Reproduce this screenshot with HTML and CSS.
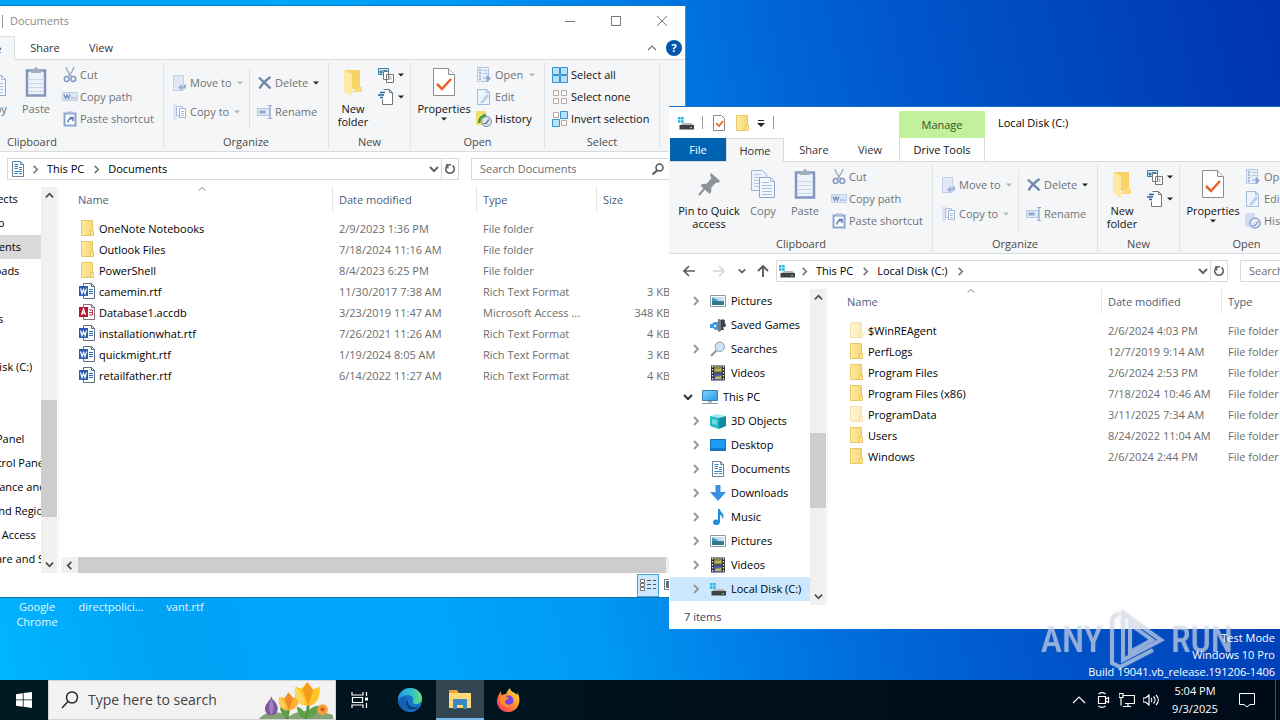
FILE: index.html
```html
<!DOCTYPE html>
<html lang="en">
<head>
<meta charset="utf-8">
<title>Desktop</title>
<link rel="stylesheet" href="styles.css">
</head>
<body>
<svg class="sprite" aria-hidden="true">
  <defs>
    <linearGradient id="g-folder" x1="0" x2="1"><stop offset="0" stop-color="#ffeba0"/><stop offset="1" stop-color="#f8d775"/></linearGradient>
    <linearGradient id="g-screen" x1="0" y1="0" x2="1" y2="1"><stop offset="0" stop-color="#7fd0ff"/><stop offset="1" stop-color="#2a9ce8"/></linearGradient>
    <linearGradient id="g-edge" x1="0" y1="0" x2="1" y2="0"><stop offset="0" stop-color="#1b9de2"/><stop offset=".6" stop-color="#35c1c8"/><stop offset="1" stop-color="#6be070"/></linearGradient>
    <linearGradient id="g-fox" x1="1" y1="0" x2="0" y2="1"><stop offset="0" stop-color="#fff04a"/><stop offset=".45" stop-color="#ff9130"/><stop offset="1" stop-color="#f5246c"/></linearGradient>
  </defs>
  <symbol id="folder" viewBox="0 0 16 16"><path d="M2.500.5h11v11l-1 4h-10z" fill="url(#g-folder)" stroke="#e9c766"/><path d="M11.500 10.500h3v5h-3z" fill="#ffe79a" stroke="#e9c766"/></symbol>
  <symbol id="word" viewBox="0 0 16 16"><path d="M4.500.5h8l3 3v12h-11z" fill="#fff" stroke="#5d6f86"/><path d="M12.500.5v3h3" fill="none" stroke="#5d6f86"/><path d="M10 6.500h4M10 8.500h4M10 10.500h4" stroke="#2b6cc0"/><path d="M0 3h9v10H0z" fill="#2a5db4"/><path d="M1.500 5.500 3 10.500l1.500-4 1.500 4 1.500-5" fill="none" stroke="#fff" stroke-width="1.200"/></symbol>
  <symbol id="access" viewBox="0 0 16 16"><path d="M4.500.5h8l3 3v12h-11z" fill="#fff" stroke="#8a7078"/><path d="M12.500.5v3h3" fill="none" stroke="#8a7078"/><path d="M10 6h3.500v5H10M10 8.500h3.500" fill="none" stroke="#c2384c"/><path d="M0 3h9v10H0z" fill="#b01c36"/><path d="m2.500 11 2-6 2 6M3.200 9h2.600" fill="none" stroke="#fff" stroke-width="1.300"/></symbol>
  <symbol id="drive" viewBox="0 0 16 16"><path d="M0 2h2.500v2.500H0zM3.200 2h2.500v2.500H3.200zM0 5.200h2.500v2.500H0zM3.200 5.200h2.500v2.500H3.200z" fill="#1cb8e0"/><path d="m5 8 8.500 0 2.500 2.500H2z" fill="#b3b6b9"/><path d="M1.500 10H16v4.500H1.500z" fill="#3f4244"/><path d="M12 12h2v1h-2z" fill="#6fdc53"/></symbol>
  <symbol id="doc" viewBox="0 0 16 16"><path d="M2.500.5h8l3 3v12h-11z" fill="#fff" stroke="#68849c"/><path d="M10.500.5v3h3" fill="none" stroke="#68849c"/><path d="M4.500 3.500h4M4.500 5.500H8M9 6.500h3M4.500 7.500H8M9 8.500h3M4.500 10.500h7.500M4.500 12.500h3M9 12.500h3" stroke="#3085c8"/></symbol>
  <symbol id="picture" viewBox="0 0 16 16"><path d="M.5 2.500h15v11H.5z" fill="#fff" stroke="#8a9aa8"/><path d="M2 4h12v8H2z" fill="#bfe0f5"/><path d="M2 8c3-2 6 1 12 0v4H2z" fill="#337a8c"/><path d="M2 5c3 0 5 2 7 2l-7 1z" fill="#4b8fc8"/></symbol>
  <symbol id="games" viewBox="0 0 16 16"><path d="M0 7h2l2-2h4v8H5L3 11H0z" fill="#3d9be0"/><path d="M8 1.500 11 3v11l-3 1z" fill="#6f7b85"/><path d="M11 3c3-2 5 1 3.500 3C17 7 16 11 13 10l1 3h-3z" fill="#3c444b"/><circle cx="5" cy="9" r="1.200" fill="#d8efff"/></symbol>
  <symbol id="search-lens" viewBox="0 0 16 16"><circle cx="9.800" cy="5.800" r="4.700" fill="#cde7f8" stroke="#8799a8"/><path d="M6.300 9.500 1 15" stroke="#8a97a2" stroke-width="2"/></symbol>
  <symbol id="video" viewBox="0 0 16 16"><path d="M1 .5h14v15H1z" fill="#2b2d33"/><path d="M4 1h8v6.500H4z" fill="#7d8b4c"/><path d="M4 8.500h8V15H4z" fill="#4d5fae"/><path d="M5 5c2-3 3 1 6-2v3H5zM5 13c3-4 4 1 6-3v4H5z" fill="#c9b850"/><path d="M2.500 1v15M13.500 1v15" stroke="#f0f0f0" stroke-width="1.300" stroke-dasharray="1.500 1.500"/></symbol>
  <symbol id="pc" viewBox="0 0 18 16"><path d="M1.500 1.500h15v10h-15z" fill="url(#g-screen)" stroke="#3c7fae"/><path d="M7 12h4v1.500H7z" fill="#9fb0bb"/><path d="M1 14.500h16" stroke="#8295a1"/></symbol>
  <symbol id="cube" viewBox="0 0 16 16"><path d="m0 3 7-2 9 2-7 2z" fill="#9eecef"/><path d="m0 3 9 2v11l-9-3z" fill="#25b8c4"/><path d="m9 5 7-2v10l-7 3z" fill="#128b9c"/><path d="m2 6 5 1v5l-5-1z" fill="#6fdbe2"/></symbol>
  <symbol id="desktop-i" viewBox="0 0 16 16"><path d="M.5 2.500h15v11H.5z" fill="#1d9bf3" stroke="#1670b8"/><path d="M1 12h14" stroke="#0b5fa8"/></symbol>
  <symbol id="download" viewBox="0 0 16 16"><path d="M5.500 0h5v7H16l-8 9-8-9h5.500z" fill="#3b8ddd"/></symbol>
  <symbol id="music" viewBox="0 0 16 16"><path d="M8 0h2c0 3 4 4 3.500 8-.3 1.500-1 2-1.500 2 1-3-1-3.500-2-4v7c0 4-7 4-7 .5C3 10.500 6 10 8 11z" fill="#1e8fdc"/></symbol>
  <symbol id="scissors" viewBox="0 0 16 16"><path d="M4 0c.5 4 3 6 5.500 9.500M12 0c-.5 4-3 6-5.500 9.500" fill="none" stroke="#9aa8bf" stroke-width="1.400"/><circle cx="4.700" cy="12" r="2.400" fill="none" stroke="#8298c4" stroke-width="1.500"/><circle cx="11.300" cy="12" r="2.400" fill="none" stroke="#8298c4" stroke-width="1.500"/></symbol>
  <symbol id="copypath" viewBox="0 0 16 16"><path d="M.5 3.500h15v8H.5z" fill="#dce6f5" stroke="#c3d0e7"/><path d="m2 5.500 1.500 4L5 6l1.500 3.500 1.500-4M9 9h1.500M11.300 9h1.200M13.300 9h1" fill="none" stroke="#6f8ac2" stroke-width="1.200"/></symbol>
  <symbol id="pasteshort" viewBox="0 0 16 16"><path d="M2.500 2.500h11v12h-11z" fill="#fff" stroke="#8ea5cf" stroke-width="2"/><path d="M5 .5h6v3H5z" fill="#a9bade"/><path d="M6 11.500c0-3 1-4 4-4M7.500 6.500H11V10" fill="none" stroke="#5778ba" stroke-width="1.500"/></symbol>
  <symbol id="moveto" viewBox="0 0 16 16"><path d="M1.500.5h10v15h-10z" fill="#e1e8f5" stroke="#c3d0e7"/><path d="M13 9.500V12.500H9" fill="none" stroke="#9db1d4" stroke-width="2"/><path d="M6 12.500 10 9v7z" fill="#9db1d4"/></symbol>
  <symbol id="copyto" viewBox="0 0 16 16"><path d="M1 .5h4v15H1z" fill="#dce5f5"/><path d="M4.500 2.500h6v9h-6z" fill="#f2f6fc" stroke="#adbfdf"/><path d="M7.500 4.500h6v9h-6z" fill="#fff" stroke="#9db3d9"/><path d="M9 7.500h3M9 9.500h3M9 11.500h3" stroke="#a9bcdd"/></symbol>
  <symbol id="delete" viewBox="0 0 16 16"><path d="M2 2.500c4 4 8 7 11.500 11M13.500 2C9 5 5 9 2.500 13.500" fill="none" stroke="#7287ae" stroke-width="2.400"/></symbol>
  <symbol id="rename" viewBox="0 0 16 16"><path d="M.5 4.500h12v7H.5z" fill="#dfe8f6" stroke="#b4c6e4"/><path d="M2.500 6.500h6v3h-6z" fill="#8fa8d4"/><path d="M11 1.500h4M13 1.500v13M11 14.500h4" stroke="#91a8cd" stroke-width="1.200"/></symbol>
  <symbol id="newitem" viewBox="0 0 16 16"><path d="M.5 1.500h10v6H.5z" fill="#d9eff8" stroke="#3a7ca5"/><path d="M2 4h2v2H2zM5 3.500h4" fill="#3a7ca5" stroke="#3a7ca5"/><path d="M5.500 4.500h5v8h-5zM8.500 7.500h7v8h-7z" fill="#fff" stroke="#777"/><path d="M10.500 10h3M10.500 12h3" stroke="#999"/></symbol>
  <symbol id="easy" viewBox="0 0 16 16"><path d="M5.500.5h6l3 3v12h-10v-5" fill="#fff" stroke="#777"/><path d="M11.500.5v3h3" fill="none" stroke="#777"/><path d="M2 3.500h5M0 6h6M2 8.500h3" stroke="#265f9e" stroke-width="1.300"/></symbol>
  <symbol id="open" viewBox="0 0 16 16"><path d="M1.500.5h11v14h-11z" fill="#eaf0f9" stroke="#b5c5e2"/><path d="M3 3h2M3 6h2M3 9h2M3 12h2" stroke="#8ea3cd" stroke-width="1.500"/><path d="M6.500 3.500h5M6.500 6.500h5" stroke="#b5c5e2"/><path d="M7 11h4M11 8.500l3.500 3-3.500 3z" fill="#8ea6d3" stroke="#8ea6d3"/></symbol>
  <symbol id="edit" viewBox="0 0 16 16"><path d="M1.500.5h9l3 3v12h-12z" fill="#edf3fb" stroke="#a4bbdb"/><path d="M10.500.5v3h3" fill="none" stroke="#a4bbdb"/><path d="m4 14 7-9 2 2-6 7z" fill="#b6cdec"/></symbol>
  <symbol id="history" viewBox="0 0 16 16"><path d="M0 0h10v14H0z" fill="#f7dc6e"/><path d="M3 12c0-5 3-7 6-7l-1-2" fill="none" stroke="#3d9d3e" stroke-width="2.500"/><circle cx="10.500" cy="10.500" r="5" fill="#dbe4ea" stroke="#7a8790"/><path d="M7.500 12.500h2.500l3-4" fill="none" stroke="#4f6472" stroke-width="1.200"/></symbol>
  <symbol id="history-dim" viewBox="0 0 16 16"><path d="M0 0h10v14H0z" fill="#d3ddf0"/><circle cx="10" cy="10" r="5" fill="#e4ebf7" stroke="#8fa5cf" stroke-width="1.500"/><path d="M7.500 12.500h2.500l3-4" fill="none" stroke="#7890c0" stroke-width="1.200"/></symbol>
  <symbol id="selall" viewBox="0 0 16 16"><path d="M.5.5h7v7h-7zM8.500.5h7v7h-7zM.5 8.500h7v7h-7zM8.500 8.500h7v7h-7z" fill="#b8e2fa" stroke="#3a93cf"/></symbol>
  <symbol id="selnone" viewBox="0 0 16 16"><path d="M1.500 1.500h5v5h-5zM9.500 1.500h5v5h-5zM1.500 9.500h5v5h-5zM9.500 9.500h5v5h-5z" fill="#fff" stroke="#b9a9a2"/></symbol>
  <symbol id="selinv" viewBox="0 0 16 16"><path d="M1.500 1.500h5v5h-5zM9.500 9.500h5v5h-5z" fill="#fff" stroke="#b9a9a2"/><path d="M8.500.5h7v7h-7zM.5 8.500h7v7h-7z" fill="#b8e2fa" stroke="#3a93cf"/></symbol>
  <symbol id="pin" viewBox="0 0 32 32"><path d="m18 5 9 8-2 2-2-.5-5 5.500c1 3 0 5-1.500 6L7.500 17.500c1.500-2 4-2 6-1.500l5-6-1.500-3z" fill="#8c9298"/><path d="m12 20-6 7" stroke="#8c9298" stroke-width="2"/></symbol>
  <symbol id="copy" viewBox="0 0 32 32"><path d="M4.500 2.500h11l4 4v16h-15z" fill="#eef3fb" stroke="#9fb2d8"/><path d="M7 6.500h7M7 9.500h10M7 12.500h10M7 15.500h10M7 18.500h10" stroke="#b7c8e6"/><path d="M12.500 9.500h11l4 4v16h-15z" fill="#f4f8fd" stroke="#8fa6d2"/><path d="M23.500 9.500v4h4M15 14.500h7M15 17.500h10M15 20.500h10M15 23.500h10M15 26.500h10" fill="none" stroke="#a9bde0"/></symbol>
  <symbol id="paste" viewBox="0 0 32 32"><path d="M7 4.500h18v25H7z" fill="#eef3fa" stroke="#8296c0" stroke-width="2.500"/><path d="M9 13.500h14M9 17.500h14M9 21.500h14M9 25.500h14" stroke="#c8d5ea"/><path d="M11 7V4h3c0-4 4-4 4 0h3v3z" fill="#a3aec1"/></symbol>
  <symbol id="newfolder" viewBox="0 0 32 32"><path d="M7 4h16v19H8z" fill="#f6d267"/><path d="m7 4 8 4v22l-8-5z" fill="#ffe9a3"/><path d="M20 21h5v5H15z" fill="#f9da7b"/></symbol>
  <symbol id="props" viewBox="0 0 32 32"><path d="M5.500 2.500h15l6 6v21h-21z" fill="#fff" stroke="#8d8d8d"/><path d="M20.500 2.500v6h6" fill="#f4f4f4" stroke="#8d8d8d"/><path d="m9 18 5 5 9-10" fill="none" stroke="#e8612a" stroke-width="2.500"/></symbol>
  <symbol id="props-s" viewBox="0 0 16 16"><path d="M2.500.5h8l3 3v12h-11z" fill="#fff" stroke="#8f8380"/><path d="m5 8 3 3 4-5" fill="none" stroke="#e8612a" stroke-width="1.700"/></symbol>
  <symbol id="down" viewBox="0 0 8 8"><path d="M1 2.500h6L4 5.500z" fill="currentColor"/></symbol>
  <symbol id="chev-r" viewBox="0 0 10 10"><path d="m3 1 4 4-4 4" fill="none" stroke="currentColor" stroke-width="1.800"/></symbol>
  <symbol id="chev-l" viewBox="0 0 10 10"><path d="M7 1 3 5l4 4" fill="none" stroke="currentColor" stroke-width="2"/></symbol>
  <symbol id="chev-d" viewBox="0 0 10 10"><path d="m1 3 4 4 4-4" fill="none" stroke="currentColor" stroke-width="2"/></symbol>
  <symbol id="chev-u" viewBox="0 0 10 10"><path d="m1 7 4-4 4 4" fill="none" stroke="currentColor" stroke-width="2"/></symbol>
  <symbol id="chev-thin" viewBox="0 0 10 10"><path d="m1 7 4-4 4 4" fill="none" stroke="currentColor" stroke-width="1.200"/></symbol>
  <symbol id="arrow-l" viewBox="0 0 16 16"><path d="M14 8H3M8 3 3 8l5 5" fill="none" stroke="currentColor" stroke-width="1.700"/></symbol>
  <symbol id="arrow-r" viewBox="0 0 16 16"><path d="M2 8h11M8 3l5 5-5 5" fill="none" stroke="currentColor" stroke-width="1.500"/></symbol>
  <symbol id="arrow-u" viewBox="0 0 16 16"><path d="M8 14V3M3 8l5-5 5 5" fill="none" stroke="currentColor" stroke-width="1.900"/></symbol>
  <symbol id="refresh" viewBox="0 0 16 16"><path d="M10.500 4.500a4.300 4.300 0 1 1-5 0" fill="none" stroke="currentColor" stroke-width="1.600"/><path d="M4 3h5v1.500H6.500V7.500H5z" fill="currentColor"/></symbol>
  <symbol id="lens" viewBox="0 0 16 16"><circle cx="9.500" cy="6.500" r="3.500" fill="none" stroke="currentColor" stroke-width="1.500"/><path d="M7 9.500 2.500 13.500" stroke="currentColor" stroke-width="2"/></symbol>
</svg>

<main class="desktop">
  <ul class="shortcuts">
    <li>Google Chrome</li>
    <li>directpolici...</li>
    <li>vant.rtf</li>
  </ul>

  <section class="window window-docs">
    <header class="titlebar">
      <span class="quick"><i class="bar"></i></span>
      <span class="caption">Documents</span>
      <span class="controls">
        <button aria-label="Minimize"><svg viewBox="0 0 12 12"><path d="M1 6.500h10"/></svg></button>
        <button aria-label="Maximize"><svg viewBox="0 0 12 12"><path d="M1.500 1.500h9v9h-9z"/></svg></button>
        <button aria-label="Close"><svg viewBox="0 0 12 12"><path d="m1 1 10 10M11 1 1 11"/></svg></button>
      </span>
    </header>
    <nav class="tabs">
      <button class="tab-file" aria-label="File"></button><button class="tab tab-on">Home</button><button class="tab">Share</button><button class="tab">View</button>
      <span class="tab-tools"><svg><use href="#chev-thin"/></svg><button class="help" aria-label="Help">?</button></span>
    </nav>
    <div class="ribbon">
      <div class="group g-clip">
        <div class="group-body">
          <span class="big w-pin"></span>
          <button class="big w-copy dim"><svg><use href="#copy"/></svg>Copy</button>
          <button class="big w-paste dim"><svg><use href="#paste"/></svg>Paste</button>
          <div class="stack">
            <button class="small dim"><svg><use href="#scissors"/></svg>Cut</button>
            <button class="small dim"><svg><use href="#copypath"/></svg>Copy path</button>
            <button class="small dim"><svg><use href="#pasteshort"/></svg>Paste shortcut</button>
          </div>
        </div>
        <div class="group-name">Clipboard</div>
      </div>
      <div class="group g-org">
        <div class="group-body">
          <div class="stack two first">
            <button class="small dim"><svg><use href="#moveto"/></svg>Move to<svg class="dd pale"><use href="#down"/></svg></button>
            <button class="small dim"><svg><use href="#copyto"/></svg>Copy to<svg class="dd pale"><use href="#down"/></svg></button>
          </div>
          <div class="stack two">
            <button class="small dim"><svg><use href="#delete"/></svg>Delete<svg class="dd"><use href="#down"/></svg></button>
            <button class="small dim"><svg><use href="#rename"/></svg>Rename</button>
          </div>
        </div>
        <div class="group-name">Organize</div>
      </div>
      <div class="group g-new">
        <div class="group-body">
          <button class="big w-new"><svg><use href="#newfolder"/></svg>New folder</button>
          <div class="stack flush">
            <button class="small tight" aria-label="New item"><svg><use href="#newitem"/></svg><svg class="dd"><use href="#down"/></svg></button>
            <button class="small tight" aria-label="Easy access"><svg><use href="#easy"/></svg><svg class="dd"><use href="#down"/></svg></button>
          </div>
        </div>
        <div class="group-name">New</div>
      </div>
      <div class="group g-open">
        <div class="group-body">
          <button class="big w-props"><svg><use href="#props"/></svg>Properties<svg class="dd"><use href="#down"/></svg></button>
          <div class="stack flush">
            <button class="small dim"><svg><use href="#open"/></svg>Open<svg class="dd pale"><use href="#down"/></svg></button>
            <button class="small dim"><svg><use href="#edit"/></svg>Edit</button>
            <button class="small"><svg><use href="#history"/></svg>History</button>
          </div>
        </div>
        <div class="group-name">Open</div>
      </div>
      <div class="group g-select">
        <div class="group-body">
          <div class="stack sel">
            <button class="small"><svg><use href="#selall"/></svg>Select all</button>
            <button class="small"><svg><use href="#selnone"/></svg>Select none</button>
            <button class="small"><svg><use href="#selinv"/></svg>Invert selection</button>
          </div>
        </div>
        <div class="group-name">Select</div>
      </div>
    </div>
    <div class="address">
      <div class="nav"></div>
      <div class="crumbs">
        <svg class="ic"><use href="#doc"/></svg>
        <svg class="sep"><use href="#chev-r"/></svg><button>This PC</button>
        <svg class="sep"><use href="#chev-r"/></svg><button>Documents</button>
        <button class="hist" aria-label="Previous locations"><svg><use href="#chev-d"/></svg></button>
        <button class="refresh" aria-label="Refresh"><svg><use href="#refresh"/></svg></button>
      </div>
      <div class="search"><input type="text" placeholder="Search Documents" aria-label="Search Documents"><svg><use href="#lens"/></svg></div>
    </div>
    <div class="content">
      <ul class="tree">
        <li class="leaf">3D Objects</li>
        <li class="leaf">Desktop</li>
        <li class="leaf chosen-idle">Documents</li>
        <li class="leaf">Downloads</li>
        <li class="leaf"></li>
        <li class="leaf">Pictures</li>
        <li class="leaf"></li>
        <li class="leaf">Local Disk (C:)</li>
        <li></li>
        <li></li>
        <li class="root">Control Panel</li>
        <li class="leaf">All Control Panel Items</li>
        <li class="leaf">Appearance and Personalization</li>
        <li class="leaf">Clock and Region</li>
        <li class="leaf">Ease of Access</li>
        <li class="leaf">Hardware and Sound</li>
      </ul>
      <div class="vscroll vscroll-docs"><svg><use href="#chev-u"/></svg><i></i><svg><use href="#chev-d"/></svg></div>
      <div class="pane">
        <svg class="sort"><use href="#chev-thin"/></svg>
        <table class="files">
          <colgroup><col class="c-name"><col class="c-date-wide"><col class="c-type"><col class="c-size"></colgroup>
          <thead><tr><th>Name</th><th>Date modified</th><th>Type</th><th>Size</th></tr></thead>
          <tbody>
            <tr><td><svg><use href="#folder"/></svg>OneNote Notebooks</td><td>2/9/2023 1:36 PM</td><td>File folder</td><td></td></tr>
            <tr><td><svg><use href="#folder"/></svg>Outlook Files</td><td>7/18/2024 11:16 AM</td><td>File folder</td><td></td></tr>
            <tr><td><svg><use href="#folder"/></svg>PowerShell</td><td>8/4/2023 6:25 PM</td><td>File folder</td><td></td></tr>
            <tr><td><svg><use href="#word"/></svg>camemin.rtf</td><td>11/30/2017 7:38 AM</td><td>Rich Text Format</td><td>3 KB</td></tr>
            <tr><td><svg><use href="#access"/></svg>Database1.accdb</td><td>3/23/2019 11:47 AM</td><td>Microsoft Access ...</td><td>348 KB</td></tr>
            <tr><td><svg><use href="#word"/></svg>installationwhat.rtf</td><td>7/26/2021 11:26 AM</td><td>Rich Text Format</td><td>4 KB</td></tr>
            <tr><td><svg><use href="#word"/></svg>quickmight.rtf</td><td>1/19/2024 8:05 AM</td><td>Rich Text Format</td><td>3 KB</td></tr>
            <tr><td><svg><use href="#word"/></svg>retailfather.rtf</td><td>6/14/2022 11:27 AM</td><td>Rich Text Format</td><td>4 KB</td></tr>
          </tbody>
        </table>
        <div class="hscroll"><svg><use href="#chev-l"/></svg><i></i></div>
      </div>
    </div>
    <footer class="status">
      <span class="views">
        <button class="view-on" aria-label="Details"><svg viewBox="0 0 18 16"><path d="M1.500 2.500h4v3h-4zM1.500 6.500h4v3h-4zM1.500 10.500h4v3h-4z" fill="#fff" stroke="#777"/><path d="M8 3.500h4M8 7.500h4M8 11.500h4M14 3.500h3M14 7.500h3M14 11.500h3" stroke="#555"/></svg></button>
        <button aria-label="Large icons"><svg viewBox="0 0 18 16"><path d="M3.500 2.500h12v10h-12z" fill="#fff" stroke="#777"/><path d="M5 4h9v7H5z" fill="#5a6f80"/></svg></button>
      </span>
    </footer>
  </section>

  <section class="window window-disk">
    <header class="titlebar">
      <span class="quick"><svg><use href="#drive"/></svg><i class="bar"></i><svg><use href="#props-s"/></svg><svg><use href="#folder"/></svg><svg class="cust" viewBox="0 0 8 8"><path d="M1 .5h6" stroke="#222"/><path d="M0 3h8L4 7z" fill="#222"/></svg><i class="bar"></i></span>
      <span class="manage">Manage</span>
      <span class="caption">Local Disk (C:)</span>
    </header>
    <nav class="tabs">
      <button class="tab-file">File</button><button class="tab tab-on">Home</button><button class="tab">Share</button><button class="tab">View</button><button class="tab-drive">Drive Tools</button>
    </nav>
    <div class="ribbon">
      <div class="group g-clip">
        <div class="group-body">
          <button class="big w-pin"><svg><use href="#pin"/></svg>Pin to Quick access</button>
          <button class="big w-copy dim"><svg><use href="#copy"/></svg>Copy</button>
          <button class="big w-paste dim"><svg><use href="#paste"/></svg>Paste</button>
          <div class="stack">
            <button class="small dim"><svg><use href="#scissors"/></svg>Cut</button>
            <button class="small dim"><svg><use href="#copypath"/></svg>Copy path</button>
            <button class="small dim"><svg><use href="#pasteshort"/></svg>Paste shortcut</button>
          </div>
        </div>
        <div class="group-name">Clipboard</div>
      </div>
      <div class="group g-org">
        <div class="group-body">
          <div class="stack two first">
            <button class="small dim"><svg><use href="#moveto"/></svg>Move to<svg class="dd pale"><use href="#down"/></svg></button>
            <button class="small dim"><svg><use href="#copyto"/></svg>Copy to<svg class="dd pale"><use href="#down"/></svg></button>
          </div>
          <div class="stack two">
            <button class="small dim"><svg><use href="#delete"/></svg>Delete<svg class="dd"><use href="#down"/></svg></button>
            <button class="small dim"><svg><use href="#rename"/></svg>Rename</button>
          </div>
        </div>
        <div class="group-name">Organize</div>
      </div>
      <div class="group g-new">
        <div class="group-body">
          <button class="big w-new"><svg><use href="#newfolder"/></svg>New folder</button>
          <div class="stack flush">
            <button class="small tight" aria-label="New item"><svg><use href="#newitem"/></svg><svg class="dd"><use href="#down"/></svg></button>
            <button class="small tight" aria-label="Easy access"><svg><use href="#easy"/></svg><svg class="dd"><use href="#down"/></svg></button>
          </div>
        </div>
        <div class="group-name">New</div>
      </div>
      <div class="group g-open">
        <div class="group-body">
          <button class="big w-props"><svg><use href="#props"/></svg>Properties<svg class="dd"><use href="#down"/></svg></button>
          <div class="stack flush">
            <button class="small dim"><svg><use href="#open"/></svg>Open</button>
            <button class="small dim"><svg><use href="#edit"/></svg>Edit</button>
            <button class="small dim"><svg><use href="#history-dim"/></svg>History</button>
          </div>
        </div>
        <div class="group-name">Open</div>
      </div>
    </div>
    <div class="address">
      <div class="nav">
        <button aria-label="Back"><svg><use href="#arrow-l"/></svg></button>
        <button class="off" aria-label="Forward"><svg><use href="#arrow-r"/></svg></button>
        <button class="recent" aria-label="Recent locations"><svg><use href="#chev-d"/></svg></button>
        <button class="up" aria-label="Up"><svg><use href="#arrow-u"/></svg></button>
      </div>
      <div class="crumbs">
        <svg class="ic"><use href="#drive"/></svg>
        <svg class="sep"><use href="#chev-r"/></svg><button>This PC</button>
        <svg class="sep"><use href="#chev-r"/></svg><button>Local Disk (C:)</button>
        <svg class="sep"><use href="#chev-r"/></svg>
        <button class="hist" aria-label="Previous locations"><svg><use href="#chev-d"/></svg></button>
        <button class="refresh" aria-label="Refresh"><svg><use href="#refresh"/></svg></button>
      </div>
      <div class="search"><input type="text" placeholder="Search Local Disk (C:)" aria-label="Search Local Disk (C:)"></div>
    </div>
    <div class="content">
      <ul class="tree">
        <li class="node"><svg class="tw"><use href="#chev-r"/></svg><svg class="ic"><use href="#picture"/></svg>Pictures</li>
        <li class="node"><i class="tw"></i><svg class="ic"><use href="#games"/></svg>Saved Games</li>
        <li class="node"><svg class="tw"><use href="#chev-r"/></svg><svg class="ic"><use href="#search-lens"/></svg>Searches</li>
        <li class="node"><i class="tw"></i><svg class="ic"><use href="#video"/></svg>Videos</li>
        <li class="node top"><svg class="tw"><use href="#chev-d"/></svg><svg class="ic"><use href="#pc"/></svg>This PC</li>
        <li class="node"><svg class="tw"><use href="#chev-r"/></svg><svg class="ic"><use href="#cube"/></svg>3D Objects</li>
        <li class="node"><svg class="tw"><use href="#chev-r"/></svg><svg class="ic"><use href="#desktop-i"/></svg>Desktop</li>
        <li class="node"><svg class="tw"><use href="#chev-r"/></svg><svg class="ic"><use href="#doc"/></svg>Documents</li>
        <li class="node"><svg class="tw"><use href="#chev-r"/></svg><svg class="ic"><use href="#download"/></svg>Downloads</li>
        <li class="node"><svg class="tw"><use href="#chev-r"/></svg><svg class="ic"><use href="#music"/></svg>Music</li>
        <li class="node"><svg class="tw"><use href="#chev-r"/></svg><svg class="ic"><use href="#picture"/></svg>Pictures</li>
        <li class="node"><svg class="tw"><use href="#chev-r"/></svg><svg class="ic"><use href="#video"/></svg>Videos</li>
        <li class="node chosen"><svg class="tw"><use href="#chev-r"/></svg><svg class="ic"><use href="#drive"/></svg>Local Disk (C:)</li>
      </ul>
      <div class="vscroll vscroll-disk"><svg><use href="#chev-u"/></svg><i></i><svg><use href="#chev-d"/></svg></div>
      <div class="pane">
        <svg class="sort"><use href="#chev-thin"/></svg>
        <table class="files">
          <colgroup><col class="c-name"><col class="c-date"><col class="c-type"></colgroup>
          <thead><tr><th>Name</th><th>Date modified</th><th>Type</th></tr></thead>
          <tbody>
            <tr><td><svg class="faint"><use href="#folder"/></svg>$WinREAgent</td><td>2/6/2024 4:03 PM</td><td>File folder</td></tr>
            <tr><td><svg><use href="#folder"/></svg>PerfLogs</td><td>12/7/2019 9:14 AM</td><td>File folder</td></tr>
            <tr><td><svg><use href="#folder"/></svg>Program Files</td><td>2/6/2024 2:53 PM</td><td>File folder</td></tr>
            <tr><td><svg><use href="#folder"/></svg>Program Files (x86)</td><td>7/18/2024 10:46 AM</td><td>File folder</td></tr>
            <tr><td><svg class="faint"><use href="#folder"/></svg>ProgramData</td><td>3/11/2025 7:34 AM</td><td>File folder</td></tr>
            <tr><td><svg><use href="#folder"/></svg>Users</td><td>8/24/2022 11:04 AM</td><td>File folder</td></tr>
            <tr><td><svg><use href="#folder"/></svg>Windows</td><td>2/6/2024 2:44 PM</td><td>File folder</td></tr>
          </tbody>
        </table>
      </div>
    </div>
    <footer class="status">7 items</footer>
  </section>

  <div class="brand"><span>ANY</span><svg viewBox="0 0 56 60"><path d="M14 3v47l38-20zM21 14l22 16-22 12z" fill="none" stroke="currentColor" stroke-width="4"/><path d="M3 8v45l8 4 33-17M3 8l7-5" fill="none" stroke="currentColor" stroke-width="4"/></svg><span>RUN</span></div>
  <div class="build"><div>Test Mode</div><div>Windows 10 Pro</div><div>Build 19041.vb_release.191206-1406</div></div>
</main>

<footer class="taskbar">
  <button class="start" aria-label="Start"><svg viewBox="0 0 16 16"><path d="m0 2.200 6.800-1v6.300H0zM7.600 1.100 16 0v7.500H7.600zM0 8.300h6.800v6.400L0 13.800zM7.600 8.300H16V16l-8.400-1.200z" fill="#fff"/></svg></button>
  <label class="find">
    <svg class="find-lens" viewBox="0 0 18 18"><circle cx="11" cy="6.500" r="5.500" fill="none" stroke="#222" stroke-width="1.400"/><path d="m7 10.500-6 6.500" stroke="#222" stroke-width="1.400"/></svg>
    <input type="text" placeholder="Type here to search" aria-label="Type here to search">
    <svg class="flowers" viewBox="0 0 78 40">
      <path d="M0 40c8-10 22-8 32-3 12-9 34-6 46-1v4z" fill="#86a374"/>
      <path d="M8 34c-4-6 0-10 4-15l1-3 1 3c6 5 8 12 3 16-3 2-7 2-9-1z" fill="#7b5aa0"/><path d="M13 19c-3 6-3 12 0 17 3-5 3-11 0-17z" fill="#a383c2"/>
      <path d="M31 28c0 5-1 8-2 12M52 24c0 6-1 11-3 16" stroke="#4a8f3b" stroke-width="3"/>
      <path d="M32 39c-1-8-6-11-10-11 1 7 5 11 10 11zM50 39c0-9 7-13 13-13 0 7-5 13-13 13zM49 39c0-8-5-11-9-12 0 7 4 12 9 12z" fill="#5fa04c"/>
      <path d="M21 17c-1 9 3 14 10 14s12-6 11-15l-7 2-4-6-4 6z" fill="#f9b233"/><path d="m27 19 4-7 5 6-4 13z" fill="#f08a24"/><path d="M21 17c5 3 7 7 8 13-6-2-8-6-8-13z" fill="#ffce4d"/>
      <path d="M38 6c-2 13 4 20 13 20s14-8 13-20l-7 3-6-8-6 7z" fill="#ffc425"/><path d="m46 9 5-8 6 9-5 16z" fill="#f59a1e"/><path d="M38 6c6 4 9 9 10 19-8-2-11-9-10-19z" fill="#ffd95c"/>
      <circle cx="67" cy="30" r="5.500" fill="#f6a03a"/><circle cx="67" cy="30" r="2.200" fill="#c75a20"/>
    </svg>
  </label>
  <button class="app" aria-label="Task View"><svg class="tv" viewBox="0 0 18 18"><path d="M1 1v3h11V1M1 17v-3h11v3M1.500 6.500h10v5h-10zM15.500 1v4M15.500 12v5" fill="none" stroke="#fff" stroke-width="1.200"/><path d="M14 6.500h3v3h-3z" fill="#fff"/></svg></button>
  <button class="app" aria-label="Microsoft Edge"><svg viewBox="0 0 24 24"><circle cx="12" cy="12" r="12" fill="#1576c8"/><path d="M0 11C1 4 6 0 12 0c7 0 12 5 12 10 0 4-3 6-6 6-2 0-4-1-3-3 1-3-1-6-5-6-5 0-9 3-10 4z" fill="url(#g-edge)"/><path d="M9 10c-3 4-2 11 5 13-8 1-13-4-13-9 0-4 4-6 8-4z" fill="#1261b4"/><path d="M10 12c-1 6 5 9 11 6-3 4-8 5-11 2-3-3-2-7 0-8z" fill="#0d3f80"/></svg></button>
  <button class="app running" aria-label="File Explorer"><svg viewBox="0 0 24 24"><path d="M1 3h8l2 3h11v15H1z" fill="#e8a33a"/><path d="M1 6h22v15H1z" fill="#ffd977"/><path d="M5 12h14v10h-4v-4H9v4H5z" fill="#3a88c4"/></svg></button>
  <button class="app" aria-label="Firefox"><svg viewBox="0 0 24 24"><path d="M5 3c0 2 0 3 1 4 2-1 3-1 4-1 1-3 3-5 4-6 0 4 5 4 7 7 1-1 0-2 0-3 3 4 3 10 1 14-2 4-6 6-10 6C5 24 1 19 1 13c0-4 2-7 4-10z" fill="url(#g-fox)"/><circle cx="12.500" cy="12.500" r="5" fill="#7542e5"/><path d="M4 9c3-2 5-1 7 0l2 1c-1 2-4 1-4 4 1 3 5 4 8 1-1 5-9 6-12 1-1-2-2-5-1-7z" fill="#ff8a2e"/></svg></button>
  <div class="tray">
    <svg viewBox="0 0 16 16"><path d="m2 11 6-6 6 6" fill="none" stroke="#fff" stroke-width="1.200"/></svg>
    <svg viewBox="0 0 16 16"><path d="M3.500 4.500h7v7h-7zM10.500 7l3-1.500v5l-3-1.500M3.500 2c2-1.500 5-1.500 7 0M3.500 14c2 1.500 5 1.500 7 0" fill="none" stroke="#fff" stroke-width="1.200"/></svg>
    <svg viewBox="0 0 16 16"><path d="M4 3.500h11.500v8H6M0 1.500h4v4H0zM2 6v7.500M4 14.500h8M9 12v2" fill="none" stroke="#fff" stroke-width="1.200"/></svg>
    <svg viewBox="0 0 16 16"><path d="M0 6h2.500L6 3v10L2.500 10H0zM8 6c1 1 1 3 0 4M10.500 4.500c2 2 2 5 0 7M13 3c3 3 3 7 0 10" fill="none" stroke="#fff" stroke-width="1.200"/></svg>
  </div>
  <div class="clock"><div>5:04 PM</div><div>9/3/2025</div></div>
  <button class="notes" aria-label="Notifications"><svg viewBox="0 0 16 16"><path d="M.5 1.500h15v11h-4.500L8 15l-3-2.500H.5z" fill="none" stroke="#fff"/></svg></button>
  <i class="peek"></i>
</footer>
</body>
</html>
```
FILE: styles.css
```css
* { box-sizing: border-box; }
html, body { height: 100%; }
body {
  margin: 0;
  display: flex;
  flex-direction: column;
  overflow: hidden;
  font: 11px/14px "Open Sans", "Noto Sans", sans-serif;
  color: #111;
}
button, input {
  font: inherit;
  color: inherit;
  border: 0;
  padding: 0;
  background: none;
}
ul { list-style: none; margin: 0; padding: 0; }
svg { flex: none; }
.sprite { position: absolute; width: 0; height: 0; }

.desktop {
  flex: 1;
  position: relative;
  overflow: hidden;
  background: linear-gradient(78deg, #00b5ff 0%, #00a2f6 12%, #00a6fa 30%, #0098f4 43%, #0086ea 50%, #0070de 59%, #0064d4 65%, #0053c8 75%, #0043bb 88%, #0034ae 100%);
}
.shortcuts {
  position: absolute;
  left: 0;
  top: 599px;
  display: flex;
  color: #e4f6ff;
  text-align: center;
  line-height: 15px;
}
.shortcuts li { width: 74px; padding: 0 12px; display: flex; justify-content: center; }

/* windows */
.window {
  position: absolute;
  width: 785px;
  display: flex;
  flex-direction: column;
  background: #fff;
  border-top: 1px solid #1272c4;
}
.window-docs { left: -100px; top: 5px; height: 593px; border-bottom: 1px solid #1272a4; box-shadow: 1px 0 #3c8fd0; }
.window-disk { left: 669px; top: 106px; height: 523px; }

.titlebar { display: flex; height: 31px; align-items: center; }
.quick { display: flex; align-items: center; gap: 8px; padding: 0 0 0 9px; width: 230px; }
.quick svg { width: 16px; height: 16px; }
.quick svg + svg { margin-left: -1px; }
.quick svg.cust { width: 8px; height: 8px; margin: 2px 0 0 -1px; }
.bar { width: 1px; height: 13px; background: #9a9a9a; }
.window-docs .quick { width: 110px; justify-content: flex-end; padding-right: 7px; }
.window-docs .caption { color: #8a8a8a; flex: 1; }
.window-docs .titlebar { height: 30px; }
.manage {
  width: 86px;
  height: 27px;
  align-self: flex-end;
  display: flex;
  align-items: center;
  justify-content: center;
  background: #c3f09b;
  color: #33502a;
}
.window-disk .caption { padding-left: 13px; color: #000; }
.controls { display: flex; }
.controls button { width: 46px; height: 28px; display: grid; place-items: center; }
.controls svg { width: 12px; height: 12px; fill: none; stroke: #777; }

.tabs { display: flex; height: 24px; border-bottom: 1px solid #dadbdc; }
.tab-file { width: 56px; margin-left: 1px; background: #0063b1; color: #fff; }
.tab { width: 56px; color: #333; }
.tab-on { width: 58px; height: 24px; margin-right: 2px; background: #f5f6f7; border: 1px solid #dadbdc; border-bottom: 0; }
.tab-drive { width: 86px; margin-left: 1px; border: solid #dcdcdc; border-width: 0 1px; }
.tab-tools { margin-left: auto; display: flex; align-items: center; gap: 9px; padding-right: 3px; color: #777; }
.tab-tools svg { width: 10px; height: 10px; }
.help { width: 16px; height: 16px; border-radius: 50%; background: #0057a8; color: #fff; font-weight: 700; }

/* ribbon */
.ribbon { display: flex; height: 92px; padding-left: 1px; background: #f5f6f7; border-bottom: 1px solid #dadbdc; }
.group { flex: none; display: flex; flex-direction: column; border-right: 1px solid #e1e3e6; margin: 2px 0; }
.g-clip { width: 263px; }
.g-org { width: 165px; }
.g-new { width: 82px; }
.g-open { width: 134px; }
.g-select { width: 115px; }
.group-body { display: flex; flex: 1; }
.group-name { height: 15px; line-height: 16px; text-align: center; color: #4c4c4c; }
.big { display: flex; flex-direction: column; align-items: center; line-height: 13px; padding-top: 4px; }
.big > svg:first-child { width: 32px; height: 32px; margin-bottom: 4px; }
.w-pin { width: 70px; margin-left: 4px; }
.w-copy { width: 38px; }
.w-paste { width: 46px; }
.w-new { width: 48px; padding-left: 6px; padding-right: 6px; }
.w-props { width: 64px; padding-left: 2px; }
.stack { display: flex; flex-direction: column; padding: 2px 0 0 3px; }
.stack.flush { padding-left: 1px; }
.stack.sel { padding-left: 7px; }
.stack.two { padding: 6px 0 0 7px; }
.stack.two.first { width: 86px; padding: 0 0 0 8px; border-right: 1px solid #e1e3e6; margin: 6px 0 4px; }
.stack.two .small { height: 29px; }
.small { height: 22px; display: flex; align-items: center; gap: 2px; white-space: nowrap; }
.stack.flush .small, .stack.sel .small { gap: 3px; }
.small svg { width: 16px; height: 16px; }
.stack.flush .small.tight { gap: 1px; }
.dim { color: #6f7276; }
svg.dd { width: 8px; height: 8px; color: #222; }
.small .dd { margin-left: 2px; }
svg.dd.pale { color: #b4b4b4; }

/* address row */
.address { display: flex; height: 35px; padding-top: 6px; align-items: flex-start; }
.nav { width: 107px; height: 22px; display: flex; align-items: center; padding-left: 12px; color: #5c5c5c; }
.nav button { display: grid; place-items: center; width: 16px; height: 16px; margin-right: 14px; }
.nav svg { width: 16px; height: 16px; }
.nav .off { color: #d4d4d4; }
.nav .recent { width: 10px; margin-right: 8px; }
.nav .recent svg { width: 8px; height: 8px; }
.nav .up { margin: 0; }
.nav .off { margin-right: 10px; }
.crumbs { width: 452px; height: 22px; border: 1px solid #d9d9d9; display: flex; align-items: center; padding-left: 2px; color: #000; }
.crumbs .ic { width: 16px; height: 16px; margin-right: 1px; }
.crumbs .sep { width: 9px; height: 9px; color: #777; margin: 0 7px 0 4px; }
.crumbs button + .sep { margin-left: 8px; }
.hist { margin-left: auto; margin-right: 2px; width: 10px; color: #666; }
.hist svg { width: 10px; height: 10px; display: block; }
.refresh { width: 17px; height: 20px; border-left: 1px solid #d9d9d9; display: grid; place-items: center; color: #666; }
.refresh svg { width: 16px; height: 16px; }
.search { width: 208px; height: 22px; margin-left: 12px; border: 1px solid #d9d9d9; display: flex; align-items: center; padding-left: 8px; }
.search input { width: 170px; outline: 0; }
.search input::placeholder { color: #6d6d6d; opacity: 1; }
.search svg { width: 16px; height: 16px; color: #555; }

/* tree and scrollbars */
.content { flex: 1; display: flex; min-height: 0; }
.tree { width: 140px; overflow: hidden; color: #000; margin-left: 1px; }
.tree li { height: 24px; display: flex; align-items: center; white-space: nowrap; }
.leaf { padding-left: 61px; }
.root { padding-left: 54px; }
.node { padding-left: 21px; color: #000; }
.node .tw { width: 10px; height: 10px; color: #979797; margin-right: 9px; }
.node .ic { width: 16px; height: 16px; margin-right: 5px; }
.node.top { padding-left: 13px; }
.node.top .tw { color: #333; margin-right: 8px; }
.node.top .ic { width: 18px; margin-right: 4px; }
.chosen { background: #cce8ff; }
.chosen-idle { background: #d9d9d9; }
.vscroll { width: 16px; background: #f0f0f0; display: flex; flex-direction: column; align-items: center; color: #505050; }
.vscroll svg { width: 9px; height: 17px; }
.vscroll i { width: 100%; background: #cdcdcd; }
.vscroll-docs i { margin: 196px 0 auto; height: 117px; }
.vscroll-disk i { margin: 127px 0 auto; height: 75px; }

/* file list */
.pane { flex: 1; min-width: 0; display: flex; flex-direction: column; position: relative; padding-left: 2px; margin-left: 1px; border-left: 1px solid #f3f3f3; }
.sort { position: absolute; left: 138px; top: -2px; width: 10px; height: 8px; color: #777; }
.files { width: 0; border-collapse: separate; border-spacing: 0; table-layout: fixed; }
.c-name { width: 272px; }
.c-date { width: 120px; }
.c-date-wide { width: 144px; }
.c-type { width: 120px; }
.c-size { width: 80px; }
.files th { height: 25px; font-weight: 400; text-align: left; color: #4c607a; padding: 0 0 0 6px; border-right: 1px solid #e5e5e5; }
.files th:first-child, .files td:first-child { padding-left: 17px; }
.files th:last-child { border-right: 0; }
.files thead::after { content: ""; display: block; height: 6px; }
.files td { height: 21px; line-height: 21px; padding: 0 0 0 6px; color: #6d6d6d; white-space: nowrap; }
.files td:first-child { color: #000; }
.files td:nth-child(4) { text-align: right; padding-right: 7px; }
.files td svg { width: 16px; height: 16px; vertical-align: -3px; margin: 0 4px 0 1px; }
.files td svg.faint { opacity: .5; }
.hscroll { margin-top: auto; height: 16px; background: #f0f0f0; display: flex; align-items: center; color: #505050; }
.hscroll svg { width: 17px; height: 9px; }
.hscroll i { width: 588px; height: 100%; background: #cdcdcd; }
.status { height: 24px; display: flex; align-items: center; padding-left: 15px; color: #34486a; }
.views { margin-left: auto; display: flex; padding-right: 4px; }
.views button { width: 22px; height: 23px; display: grid; place-items: center; border: 1px solid transparent; }
.views svg { width: 18px; height: 16px; }
.views .view-on { background: #cce8ff; border-color: #4aa5dc; }

/* desktop overlays */
.brand {
  position: absolute;
  right: 47px;
  bottom: 10px;
  display: flex;
  align-items: center;
  gap: 6px;
  color: rgba(222, 230, 243, .6);
  font: 500 36px/60px "Liberation Sans Narrow", "Roboto Condensed", "DejaVu Sans Condensed", sans-serif;
  filter: drop-shadow(0 0 1px rgba(120, 130, 150, .5));
}
.brand svg { width: 56px; height: 60px; }
.build {
  position: absolute;
  right: 5px;
  bottom: 0;
  color: #fff;
  text-align: right;
  line-height: 17px;
}

/* taskbar */
.taskbar { flex: none; height: 40px; display: flex; background: linear-gradient(90deg, #001a24, #00101c 60%, #000b1a); color: #fff; }
.start { width: 48px; display: grid; place-items: center; }
.start svg { width: 16px; height: 16px; }
.find { width: 288px; display: flex; align-items: center; background: #f2f2f2; border: 1px solid #cfd4d6; padding-left: 12px; }
.find-lens { width: 18px; height: 18px; margin-right: 9px; }
.find input { flex: 1; min-width: 0; font-size: 14px; line-height: 20px; color: #222; outline: 0; }
.find input::placeholder { color: #444; opacity: 1; }
.flowers { width: 78px; height: 38px; }
.app { width: 48px; display: grid; place-items: center; margin-right: 2px; }
.app svg { width: 24px; height: 24px; }
.app svg.tv { width: 18px; height: 18px; }
.running { background: #33464f; border-bottom: 2px solid #76b9ed; margin-right: 0; }
.tray { margin-left: auto; display: flex; align-items: center; gap: 8px; }
.tray svg { width: 16px; height: 16px; }
.clock { width: 72px; text-align: center; line-height: 18px; padding-top: 2px; }
.notes { width: 32px; display: grid; place-items: center; }
.notes svg { width: 16px; height: 16px; }
.peek { width: 5px; margin-left: 12px; border-left: 1px solid #4a5560; }
```
